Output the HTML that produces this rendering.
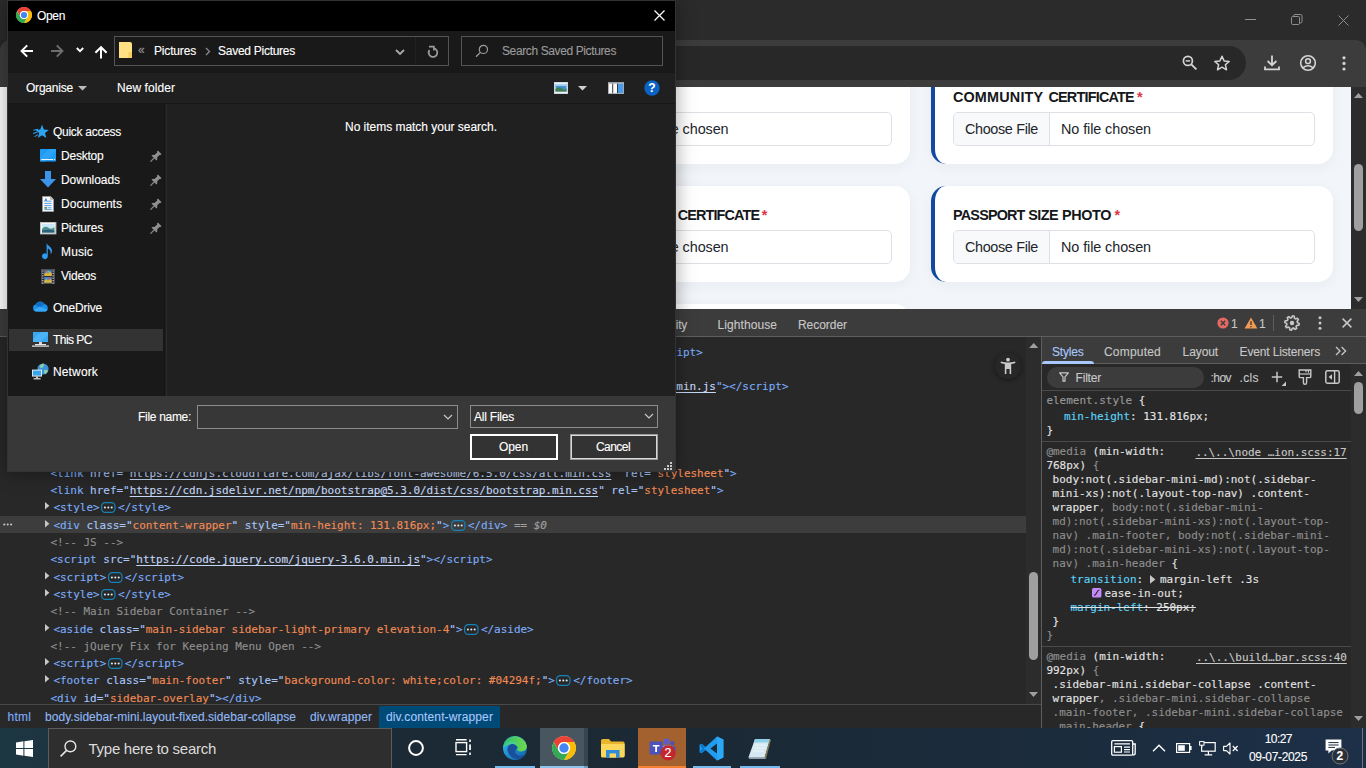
<!DOCTYPE html>
<html lang="en">
<head>
<meta charset="utf-8">
<title>Open</title>
<style>
*{box-sizing:border-box;margin:0;padding:0}
html,body{width:1366px;height:768px;overflow:hidden;background:#282828}
body{position:relative;font-family:"Liberation Sans",sans-serif;font-size:12px;color:#fff}
.a{position:absolute;display:block}
.t{position:absolute;white-space:pre;display:block;-webkit-text-stroke:.12px currentColor}
u{text-decoration:underline;text-underline-offset:1.5px;text-decoration-thickness:1px}
</style>
</head>
<body>
<div class="a" style="left:0px;top:0px;width:1366px;height:40px;background:#2b2b2b;"></div>
<div class="a" style="left:0px;top:40px;width:1366px;height:47px;background:#3c3c3c;border-radius:10px 10px 0 0;"></div>
<div class="a" style="left:150px;top:46px;width:1096px;height:34px;background:#282828;border-radius:17px;"></div>
<svg class="a" style="left:1245px;top:19px;" width="11" height="1" viewBox="0 0 11 1"><rect width="11" height="1" fill="#8f8f8f"/></svg>
<svg class="a" style="left:1291px;top:14px;" width="12" height="12" viewBox="0 0 12 12"><rect x=".5" y="2.5" width="8" height="8" rx="1.2" fill="none" stroke="#8f8f8f"/><path d="M2.6 2.5 V1.8 Q2.6 .5 3.9 .5 H9.6 Q11 .5 11 1.9 V7.6 Q11 8.9 9.7 8.9 H8.6" fill="none" stroke="#8f8f8f"/></svg>
<svg class="a" style="left:1338px;top:15px;" width="11" height="11" viewBox="0 0 11 11"><path d="M.5 .5 L10.5 10.5 M10.5 .5 L.5 10.5" stroke="#8f8f8f" stroke-width="1" fill="none"/></svg>
<svg class="a" style="left:1181px;top:54px;" width="17" height="17" viewBox="0 0 17 17"><circle cx="6.9" cy="6.9" r="4.5" fill="none" stroke="#d4d4d4" stroke-width="1.7"/><path d="M10.3 10.3 L15.4 15.4" stroke="#d4d4d4" stroke-width="1.9"/><path d="M4.7 6.9 H9.1" stroke="#d4d4d4" stroke-width="1.5"/></svg>
<svg class="a" style="left:1213px;top:54px;" width="18" height="18" viewBox="0 0 18 18"><path d="M9 2.2 L11.1 6.9 L16.2 7.4 L12.4 10.8 L13.5 15.8 L9 13.2 L4.5 15.8 L5.6 10.8 L1.8 7.4 L6.9 6.9 Z" fill="none" stroke="#d4d4d4" stroke-width="1.5" stroke-linejoin="round"/></svg>
<svg class="a" style="left:1263px;top:54px;" width="18" height="18" viewBox="0 0 18 18"><path d="M9 1.5 V11 M4.6 7 L9 11.2 L13.4 7" fill="none" stroke="#d4d4d4" stroke-width="1.8"/><path d="M2 12.4 V15.4 H16 V12.4" fill="none" stroke="#d4d4d4" stroke-width="1.8"/></svg>
<svg class="a" style="left:1299px;top:54px;" width="18" height="18" viewBox="0 0 18 18"><circle cx="9" cy="9" r="7.3" fill="none" stroke="#d4d4d4" stroke-width="1.6"/><circle cx="9" cy="7.2" r="2.4" fill="none" stroke="#d4d4d4" stroke-width="1.5"/><path d="M3.8 13.8 Q9 9.6 14.2 13.8" fill="none" stroke="#d4d4d4" stroke-width="1.5"/></svg>
<svg class="a" style="left:1342px;top:56px;" width="4" height="15" viewBox="0 0 4 15"><circle cx="2" cy="1.8" r="1.6" fill="#d4d4d4"/><circle cx="2" cy="7.4" r="1.6" fill="#d4d4d4"/><circle cx="2" cy="13" r="1.6" fill="#d4d4d4"/></svg>
<div class="a" style="left:0px;top:87px;width:1351px;height:222px;background:#f2f5f9;"></div>
<div class="a" style="left:0px;top:87px;width:1351px;height:222px;overflow:hidden"><div class="a" style="left:0px;top:-87px;width:1366px;height:768px">
<div class="a" style="left:0px;top:87px;width:66px;height:222px;background:#fff;box-shadow:0 0 12px rgba(0,0,0,.2);"></div>
<div class="a" style="left:480px;top:60px;width:430px;height:104px;background:#fff;border-radius:15px;box-shadow:0 3px 14px rgba(40,70,120,.05);"></div>
<div class="a" style="left:530.5px;top:112px;width:361px;height:34px;background:#fff;border:1px solid #dde1e6;border-radius:5px;"></div>
<div class="a" style="left:531.5px;top:113px;width:96px;height:32px;background:#f8f9fa;border-right:1px solid #dde1e6;border-radius:4px 0 0 4px;"></div>
<span class="t" style="left:542.5px;top:121.80px;font-size:14.4px;line-height:14.4px;color:#212529;letter-spacing:-0.345px;-webkit-text-stroke:0;">Choose File</span>
<span class="t" style="left:638.5px;top:121.80px;font-size:14.4px;line-height:14.4px;color:#212529;letter-spacing:-0.086px;-webkit-text-stroke:0;">No file chosen</span>
<div class="a" style="left:480px;top:186px;width:430px;height:96px;background:#fff;border-radius:15px;box-shadow:0 3px 14px rgba(40,70,120,.05);"></div>
<div class="a" style="left:530.5px;top:230px;width:361px;height:34px;background:#fff;border:1px solid #dde1e6;border-radius:5px;"></div>
<div class="a" style="left:531.5px;top:231px;width:96px;height:32px;background:#f8f9fa;border-right:1px solid #dde1e6;border-radius:4px 0 0 4px;"></div>
<span class="t" style="left:542.5px;top:239.80px;font-size:14.4px;line-height:14.4px;color:#212529;letter-spacing:-0.345px;-webkit-text-stroke:0;">Choose File</span>
<span class="t" style="left:638.5px;top:239.80px;font-size:14.4px;line-height:14.4px;color:#212529;letter-spacing:-0.086px;-webkit-text-stroke:0;">No file chosen</span>
<div class="a" style="left:480px;top:304px;width:430px;height:40px;background:#fff;border-radius:15px;box-shadow:0 3px 14px rgba(40,70,120,.05);"></div>
<div class="a" style="left:931px;top:60px;width:402px;height:104px;background:#fff;border-radius:15px;box-shadow:0 3px 14px rgba(40,70,120,.05);border-left:4px solid #114a9f;"></div>
<div class="a" style="left:953px;top:112px;width:361.5px;height:34px;background:#fff;border:1px solid #dde1e6;border-radius:5px;"></div>
<div class="a" style="left:954px;top:113px;width:96px;height:32px;background:#f8f9fa;border-right:1px solid #dde1e6;border-radius:4px 0 0 4px;"></div>
<span class="t" style="left:965px;top:121.80px;font-size:14.4px;line-height:14.4px;color:#212529;letter-spacing:-0.345px;-webkit-text-stroke:0;">Choose File</span>
<span class="t" style="left:1061px;top:121.80px;font-size:14.4px;line-height:14.4px;color:#212529;letter-spacing:-0.086px;-webkit-text-stroke:0;">No file chosen</span>
<div class="a" style="left:931px;top:186px;width:402px;height:96px;background:#fff;border-radius:15px;box-shadow:0 3px 14px rgba(40,70,120,.05);border-left:4px solid #114a9f;"></div>
<div class="a" style="left:953px;top:230px;width:361.5px;height:34px;background:#fff;border:1px solid #dde1e6;border-radius:5px;"></div>
<div class="a" style="left:954px;top:231px;width:96px;height:32px;background:#f8f9fa;border-right:1px solid #dde1e6;border-radius:4px 0 0 4px;"></div>
<span class="t" style="left:965px;top:239.80px;font-size:14.4px;line-height:14.4px;color:#212529;letter-spacing:-0.345px;-webkit-text-stroke:0;">Choose File</span>
<span class="t" style="left:1061px;top:239.80px;font-size:14.4px;line-height:14.4px;color:#212529;letter-spacing:-0.086px;-webkit-text-stroke:0;">No file chosen</span>
<span class="t" style="left:952.9000000000001px;top:89.80px;font-size:14.4px;line-height:14.4px;color:#15171a;font-weight:bold;letter-spacing:0.196px;-webkit-text-stroke:0;">COMMUNITY</span>
<span class="t" style="left:1048.4px;top:89.80px;font-size:14.4px;line-height:14.4px;color:#15171a;font-weight:bold;letter-spacing:-0.780px;-webkit-text-stroke:0;">CERTIFICATE</span>
<span class="t" style="left:1136.9px;top:89.80px;font-size:14.4px;line-height:14.4px;color:#dc3545;font-weight:bold;letter-spacing:1.591px;-webkit-text-stroke:0;">*</span>
<span class="t" style="left:953.1px;top:207.80px;font-size:14.4px;line-height:14.4px;color:#15171a;font-weight:bold;letter-spacing:-0.826px;-webkit-text-stroke:0;">PASSPORT</span>
<span class="t" style="left:1028.2px;top:207.80px;font-size:14.4px;line-height:14.4px;color:#15171a;font-weight:bold;letter-spacing:-0.550px;-webkit-text-stroke:0;">SIZE</span>
<span class="t" style="left:1061.9px;top:207.80px;font-size:14.4px;line-height:14.4px;color:#15171a;font-weight:bold;letter-spacing:-0.364px;-webkit-text-stroke:0;">PHOTO</span>
<span class="t" style="left:1114.6000000000001px;top:207.80px;font-size:14.4px;line-height:14.4px;color:#dc3545;font-weight:bold;letter-spacing:1.491px;-webkit-text-stroke:0;">*</span>
<span class="t" style="left:595.2px;top:207.80px;font-size:14.4px;line-height:14.4px;color:#15171a;font-weight:bold;letter-spacing:-0.082px;-webkit-text-stroke:0;">TRANSFER</span>
<span class="t" style="left:677.7px;top:207.80px;font-size:14.4px;line-height:14.4px;color:#15171a;font-weight:bold;letter-spacing:-0.858px;-webkit-text-stroke:0;">CERTIFCATE</span>
<span class="t" style="left:761.8000000000001px;top:207.80px;font-size:14.4px;line-height:14.4px;color:#dc3545;font-weight:bold;letter-spacing:1.691px;-webkit-text-stroke:0;">*</span>
</div></div>
<div class="a" style="left:1351px;top:87px;width:15px;height:222px;background:#2c2c2c;"></div>
<div class="a" style="left:1354px;top:164px;width:9px;height:67px;background:#9f9f9f;border-radius:5px;"></div>
<svg class="a" style="left:1354px;top:93px;" width="9" height="5" viewBox="0 0 9 5"><path d="M0 5 H9 L4.5 0 Z" fill="#9f9f9f"/></svg>
<svg class="a" style="left:1354px;top:297px;" width="9" height="5" viewBox="0 0 9 5"><path d="M0 0 H9 L4.5 5 Z" fill="#9f9f9f"/></svg>
<div class="a" style="left:0px;top:309px;width:1366px;height:419px;background:#282828;"></div>
<div class="a" style="left:0px;top:309px;width:1366px;height:28px;background:#3c3c3c;border-bottom:1px solid #5e5e5e;"></div>
<span class="t" style="left:585px;top:319.00px;font-size:12px;line-height:12px;color:#c7c7c7;letter-spacing:-0.269px;">Privacy and security</span>
<span class="t" style="left:717.5px;top:319.00px;font-size:12px;line-height:12px;color:#c7c7c7;letter-spacing:0.078px;">Lighthouse</span>
<span class="t" style="left:798px;top:319.00px;font-size:12px;line-height:12px;color:#c7c7c7;letter-spacing:-0.045px;">Recorder</span>
<svg class="a" style="left:1217px;top:317px;" width="12" height="12" viewBox="0 0 12 12"><circle cx="6" cy="6" r="5.6" fill="#e46962"/><path d="M3.8 3.8 L8.2 8.2 M8.2 3.8 L3.8 8.2" stroke="#3c3c3c" stroke-width="1.4"/></svg>
<span class="t" style="left:1231px;top:318.00px;font-size:12px;line-height:12px;color:#c7c7c7;">1</span>
<svg class="a" style="left:1244px;top:317px;" width="14" height="12" viewBox="0 0 14 12"><path d="M7 .6 L13.4 11.4 H.6 Z" fill="#f29b55"/><path d="M7 4.2 V8" stroke="#3c3c3c" stroke-width="1.4"/><circle cx="7" cy="9.7" r=".8" fill="#3c3c3c"/></svg>
<span class="t" style="left:1259px;top:318.00px;font-size:12px;line-height:12px;color:#c7c7c7;">1</span>
<div class="a" style="left:1273px;top:315px;width:1px;height:16px;background:#5e5e5e;"></div>
<svg class="a" style="left:1284px;top:315px;" width="16" height="16" viewBox="0 0 16 16"><path d="M15.18 8.48 L14.82 10.31 L12.84 10.39 L12.06 11.56 L12.74 13.42 L11.19 14.45 L9.73 13.11 L8.36 13.39 L7.52 15.18 L5.69 14.82 L5.61 12.84 L4.44 12.06 L2.58 12.74 L1.55 11.19 L2.89 9.73 L2.61 8.36 L0.82 7.52 L1.18 5.69 L3.16 5.61 L3.94 4.44 L3.26 2.58 L4.81 1.55 L6.27 2.89 L7.64 2.61 L8.48 0.82 L10.31 1.18 L10.39 3.16 L11.56 3.94 L13.42 3.26 L14.45 4.81 L13.11 6.27 L13.39 7.64 Z" fill="none" stroke="#c7c7c7" stroke-width="1.6" stroke-linejoin="round"/><circle cx="8" cy="8" r="2.2" fill="#c7c7c7"/></svg>
<svg class="a" style="left:1318px;top:316.3px;" width="4" height="14" viewBox="0 0 4 14"><circle cx="2" cy="1.8" r="1.5" fill="#c7c7c7"/><circle cx="2" cy="7" r="1.5" fill="#c7c7c7"/><circle cx="2" cy="12.2" r="1.5" fill="#c7c7c7"/></svg>
<svg class="a" style="left:1342px;top:318px;" width="10" height="10" viewBox="0 0 10 10"><path d="M.6 .6 L9.4 9.4 M9.4 .6 L.6 9.4" stroke="#c7c7c7" stroke-width="1.5"/></svg>
<div class="a" style="left:0px;top:516px;width:1026px;height:17px;background:#3d3d3d;"></div>
<svg class="a" style="left:3px;top:523px;" width="10" height="3" viewBox="0 0 10 3"><circle cx="1.3" cy="1.5" r="1.05" fill="#c7c7c7"/><circle cx="4.7" cy="1.5" r="1.05" fill="#c7c7c7"/><circle cx="8.1" cy="1.5" r="1.05" fill="#c7c7c7"/></svg>
<span class="t" style="left:643.4269999999999px;top:347.00px;font-size:11px;line-height:11px;color:#7cacf8;font-family:'DejaVu Sans Mono',monospace;letter-spacing:-0.026px;">&lt;/script&gt;</span>
<span class="t" style="left:715.933px;top:381.00px;font-size:11px;line-height:11px;color:#7cacf8;font-family:'DejaVu Sans Mono',monospace;letter-spacing:-0.027px;">&quot;&gt;&lt;/script&gt;</span>
<span class="t" style="left:214.56099999999998px;top:381.00px;font-size:11px;line-height:11px;color:#c4d7f5;font-family:'DejaVu Sans Mono',monospace;letter-spacing:-0.026px;"><u>https://cdn.jsdelivr.net/npm/bootstrap@5.3.0/dist/js/bootstrap.bundle.min.js</u></span>
<span class="t" style="left:50.5px;top:468.00px;font-size:11px;line-height:11px;color:#7cacf8;font-family:'DejaVu Sans Mono',monospace;letter-spacing:-0.025px;"><span style="color:#7cacf8">&lt;link</span><span style="color:#a8c7fa"> href=&quot;</span><span style="color:#c4d7f5"><u>https://cdnjs.cloudflare.com/ajax/libs/font-awesome/6.5.0/css/all.min.css</u></span><span style="color:#a8c7fa">&quot; rel=&quot;</span><span style="color:#f28b54">stylesheet</span><span style="color:#a8c7fa">&quot;</span><span style="color:#7cacf8">&gt;</span></span>
<span class="t" style="left:50.5px;top:485.00px;font-size:11px;line-height:11px;color:#7cacf8;font-family:'DejaVu Sans Mono',monospace;letter-spacing:-0.025px;"><span style="color:#7cacf8">&lt;link</span><span style="color:#a8c7fa"> href=&quot;</span><span style="color:#c4d7f5"><u>https://cdn.jsdelivr.net/npm/bootstrap@5.3.0/dist/css/bootstrap.min.css</u></span><span style="color:#a8c7fa">&quot; rel=&quot;</span><span style="color:#f28b54">stylesheet</span><span style="color:#a8c7fa">&quot;</span><span style="color:#7cacf8">&gt;</span></span>
<svg class="a" style="left:44.6px;top:502px;" width="5" height="8" viewBox="0 0 5 8"><path d="M0 0 L4.4 3.7 L0 7.4 Z" fill="#c7c7c7"/></svg>
<span class="t" style="left:53.4px;top:502.00px;font-size:11px;line-height:11px;color:#7cacf8;font-family:'DejaVu Sans Mono',monospace;letter-spacing:-0.020px;"><span style="color:#7cacf8">&lt;style</span><span style="color:#7cacf8">&gt;</span></span>
<svg class="a" style="left:101.2px;top:502.2px;" width="15" height="11" viewBox="0 0 15 11"><rect x=".6" y=".6" width="13.4" height="9.8" rx="3.6" fill="none" stroke="#1683b8" stroke-width="1.2"/><circle cx="3.9" cy="5.5" r="1.05" fill="#e3e9f0"/><circle cx="7.3" cy="5.5" r="1.05" fill="#e3e9f0"/><circle cx="10.7" cy="5.5" r="1.05" fill="#e3e9f0"/></svg>
<span class="t" style="left:118.07900000000001px;top:502.00px;font-size:11px;line-height:11px;color:#7cacf8;font-family:'DejaVu Sans Mono',monospace;letter-spacing:-0.026px;">&lt;/style&gt;</span>
<svg class="a" style="left:44.6px;top:520px;" width="5" height="8" viewBox="0 0 5 8"><path d="M0 0 L4.4 3.7 L0 7.4 Z" fill="#c7c7c7"/></svg>
<span class="t" style="left:53.4px;top:520.00px;font-size:11px;line-height:11px;color:#7cacf8;font-family:'DejaVu Sans Mono',monospace;letter-spacing:-0.025px;"><span style="color:#7cacf8">&lt;div</span><span style="color:#a8c7fa"> class=&quot;</span><span style="color:#f28b54">content-wrapper</span><span style="color:#a8c7fa">&quot;</span><span style="color:#a8c7fa"> style=&quot;</span><span style="color:#f28b54">min-height: 131.816px;</span><span style="color:#a8c7fa">&quot;</span><span style="color:#7cacf8">&gt;</span></span>
<svg class="a" style="left:450.8px;top:520.2px;" width="15" height="11" viewBox="0 0 15 11"><rect x=".6" y=".6" width="13.4" height="9.8" rx="3.6" fill="none" stroke="#1683b8" stroke-width="1.2"/><circle cx="3.9" cy="5.5" r="1.05" fill="#e3e9f0"/><circle cx="7.3" cy="5.5" r="1.05" fill="#e3e9f0"/><circle cx="10.7" cy="5.5" r="1.05" fill="#e3e9f0"/></svg>
<span class="t" style="left:467.72px;top:520.00px;font-size:11px;line-height:11px;color:#7cacf8;font-family:'DejaVu Sans Mono',monospace;letter-spacing:-0.028px;">&lt;/div&gt;</span>
<span class="t" style="left:507.302px;top:520.00px;font-size:11px;line-height:11px;color:#a0a0a0;font-family:'DejaVu Sans Mono',monospace;letter-spacing:-0.028px;font-style:italic;"> == $0</span>
<span class="t" style="left:50.5px;top:537.00px;font-size:11px;line-height:11px;color:#7cacf8;font-family:'DejaVu Sans Mono',monospace;letter-spacing:-0.021px;"><span style="color:#8f8f8f">&lt;!-- JS --&gt;</span></span>
<span class="t" style="left:50.5px;top:554.00px;font-size:11px;line-height:11px;color:#7cacf8;font-family:'DejaVu Sans Mono',monospace;letter-spacing:-0.025px;"><span style="color:#7cacf8">&lt;script</span><span style="color:#a8c7fa"> src=&quot;</span><span style="color:#c4d7f5"><u>https://code.jquery.com/jquery-3.6.0.min.js</u></span><span style="color:#a8c7fa">&quot;</span><span style="color:#7cacf8">&gt;&lt;/script&gt;</span></span>
<svg class="a" style="left:44.6px;top:572px;" width="5" height="8" viewBox="0 0 5 8"><path d="M0 0 L4.4 3.7 L0 7.4 Z" fill="#c7c7c7"/></svg>
<span class="t" style="left:53.4px;top:572.00px;font-size:11px;line-height:11px;color:#7cacf8;font-family:'DejaVu Sans Mono',monospace;letter-spacing:-0.019px;"><span style="color:#7cacf8">&lt;script</span><span style="color:#7cacf8">&gt;</span></span>
<svg class="a" style="left:107.8px;top:572.2px;" width="15" height="11" viewBox="0 0 15 11"><rect x=".6" y=".6" width="13.4" height="9.8" rx="3.6" fill="none" stroke="#1683b8" stroke-width="1.2"/><circle cx="3.9" cy="5.5" r="1.05" fill="#e3e9f0"/><circle cx="7.3" cy="5.5" r="1.05" fill="#e3e9f0"/><circle cx="10.7" cy="5.5" r="1.05" fill="#e3e9f0"/></svg>
<span class="t" style="left:124.676px;top:572.00px;font-size:11px;line-height:11px;color:#7cacf8;font-family:'DejaVu Sans Mono',monospace;letter-spacing:-0.026px;">&lt;/script&gt;</span>
<svg class="a" style="left:44.6px;top:589px;" width="5" height="8" viewBox="0 0 5 8"><path d="M0 0 L4.4 3.7 L0 7.4 Z" fill="#c7c7c7"/></svg>
<span class="t" style="left:53.4px;top:589.00px;font-size:11px;line-height:11px;color:#7cacf8;font-family:'DejaVu Sans Mono',monospace;letter-spacing:-0.020px;"><span style="color:#7cacf8">&lt;style</span><span style="color:#7cacf8">&gt;</span></span>
<svg class="a" style="left:101.2px;top:589.2px;" width="15" height="11" viewBox="0 0 15 11"><rect x=".6" y=".6" width="13.4" height="9.8" rx="3.6" fill="none" stroke="#1683b8" stroke-width="1.2"/><circle cx="3.9" cy="5.5" r="1.05" fill="#e3e9f0"/><circle cx="7.3" cy="5.5" r="1.05" fill="#e3e9f0"/><circle cx="10.7" cy="5.5" r="1.05" fill="#e3e9f0"/></svg>
<span class="t" style="left:118.07900000000001px;top:589.00px;font-size:11px;line-height:11px;color:#7cacf8;font-family:'DejaVu Sans Mono',monospace;letter-spacing:-0.026px;">&lt;/style&gt;</span>
<span class="t" style="left:50.5px;top:606.00px;font-size:11px;line-height:11px;color:#7cacf8;font-family:'DejaVu Sans Mono',monospace;letter-spacing:-0.024px;"><span style="color:#8f8f8f">&lt;!-- Main Sidebar Container --&gt;</span></span>
<svg class="a" style="left:44.6px;top:624px;" width="5" height="8" viewBox="0 0 5 8"><path d="M0 0 L4.4 3.7 L0 7.4 Z" fill="#c7c7c7"/></svg>
<span class="t" style="left:53.4px;top:624.00px;font-size:11px;line-height:11px;color:#7cacf8;font-family:'DejaVu Sans Mono',monospace;letter-spacing:-0.025px;"><span style="color:#7cacf8">&lt;aside</span><span style="color:#a8c7fa"> class=&quot;</span><span style="color:#f28b54">main-sidebar sidebar-light-primary elevation-4</span><span style="color:#a8c7fa">&quot;</span><span style="color:#7cacf8">&gt;</span></span>
<svg class="a" style="left:464.0px;top:624.2px;" width="15" height="11" viewBox="0 0 15 11"><rect x=".6" y=".6" width="13.4" height="9.8" rx="3.6" fill="none" stroke="#1683b8" stroke-width="1.2"/><circle cx="3.9" cy="5.5" r="1.05" fill="#e3e9f0"/><circle cx="7.3" cy="5.5" r="1.05" fill="#e3e9f0"/><circle cx="10.7" cy="5.5" r="1.05" fill="#e3e9f0"/></svg>
<span class="t" style="left:480.914px;top:624.00px;font-size:11px;line-height:11px;color:#7cacf8;font-family:'DejaVu Sans Mono',monospace;letter-spacing:-0.026px;">&lt;/aside&gt;</span>
<span class="t" style="left:50.5px;top:641.00px;font-size:11px;line-height:11px;color:#7cacf8;font-family:'DejaVu Sans Mono',monospace;letter-spacing:-0.024px;"><span style="color:#8f8f8f">&lt;!-- jQuery Fix for Keeping Menu Open --&gt;</span></span>
<svg class="a" style="left:44.6px;top:658px;" width="5" height="8" viewBox="0 0 5 8"><path d="M0 0 L4.4 3.7 L0 7.4 Z" fill="#c7c7c7"/></svg>
<span class="t" style="left:53.4px;top:658.00px;font-size:11px;line-height:11px;color:#7cacf8;font-family:'DejaVu Sans Mono',monospace;letter-spacing:-0.017px;"><span style="color:#7cacf8">&lt;script</span><span style="color:#7cacf8">&gt;</span></span>
<svg class="a" style="left:107.8px;top:658.2px;" width="15" height="11" viewBox="0 0 15 11"><rect x=".6" y=".6" width="13.4" height="9.8" rx="3.6" fill="none" stroke="#1683b8" stroke-width="1.2"/><circle cx="3.9" cy="5.5" r="1.05" fill="#e3e9f0"/><circle cx="7.3" cy="5.5" r="1.05" fill="#e3e9f0"/><circle cx="10.7" cy="5.5" r="1.05" fill="#e3e9f0"/></svg>
<span class="t" style="left:124.676px;top:658.00px;font-size:11px;line-height:11px;color:#7cacf8;font-family:'DejaVu Sans Mono',monospace;letter-spacing:-0.026px;">&lt;/script&gt;</span>
<svg class="a" style="left:44.6px;top:675px;" width="5" height="8" viewBox="0 0 5 8"><path d="M0 0 L4.4 3.7 L0 7.4 Z" fill="#c7c7c7"/></svg>
<span class="t" style="left:53.4px;top:675.00px;font-size:11px;line-height:11px;color:#7cacf8;font-family:'DejaVu Sans Mono',monospace;letter-spacing:-0.025px;"><span style="color:#7cacf8">&lt;footer</span><span style="color:#a8c7fa"> class=&quot;</span><span style="color:#f28b54">main-footer</span><span style="color:#a8c7fa">&quot;</span><span style="color:#a8c7fa"> style=&quot;</span><span style="color:#f28b54">background-color: white;color: #04294f;</span><span style="color:#a8c7fa">&quot;</span><span style="color:#7cacf8">&gt;</span></span>
<svg class="a" style="left:556.4px;top:675.2px;" width="15" height="11" viewBox="0 0 15 11"><rect x=".6" y=".6" width="13.4" height="9.8" rx="3.6" fill="none" stroke="#1683b8" stroke-width="1.2"/><circle cx="3.9" cy="5.5" r="1.05" fill="#e3e9f0"/><circle cx="7.3" cy="5.5" r="1.05" fill="#e3e9f0"/><circle cx="10.7" cy="5.5" r="1.05" fill="#e3e9f0"/></svg>
<span class="t" style="left:573.272px;top:675.00px;font-size:11px;line-height:11px;color:#7cacf8;font-family:'DejaVu Sans Mono',monospace;letter-spacing:-0.026px;">&lt;/footer&gt;</span>
<span class="t" style="left:50.5px;top:693.00px;font-size:11px;line-height:11px;color:#7cacf8;font-family:'DejaVu Sans Mono',monospace;letter-spacing:-0.024px;"><span style="color:#7cacf8">&lt;div</span><span style="color:#a8c7fa"> id=&quot;</span><span style="color:#f28b54">sidebar-overlay</span><span style="color:#a8c7fa">&quot;</span><span style="color:#7cacf8">&gt;&lt;/div&gt;</span></span>
<div class="a" style="left:995.2px;top:353.2px;width:25.6px;height:25.6px;background:#272727;border-radius:50%;box-shadow:0 1px 4px 1px rgba(0,0,0,.3);"></div>
<svg class="a" style="left:1000px;top:357px;" width="16" height="18" viewBox="0 0 16 18"><circle cx="8" cy="2.7" r="1.9" fill="#c9c9c9"/><path d="M.9 4.6 Q4.6 5.6 8 5.6 Q11.4 5.6 15.1 4.6 L15.4 6 Q12.6 6.9 11.2 7 V17 H9.6 V12 H6.4 V17 H4.8 V7 Q3.4 6.9 .6 6 Z" fill="#c9c9c9"/></svg>
<div class="a" style="left:1026px;top:337px;width:15.5px;height:367px;background:#2c2c2c;"></div>
<div class="a" style="left:1029px;top:572px;width:9px;height:88px;background:#9f9f9f;border-radius:4.5px;"></div>
<svg class="a" style="left:1029px;top:343px;" width="9.4" height="5.2" viewBox="0 0 9.4 5.2"><path d="M0 5.2 H9.4 L4.7 0 Z" fill="#9f9f9f"/></svg>
<svg class="a" style="left:1029px;top:691.5px;" width="9" height="5" viewBox="0 0 9 5"><path d="M0 0 H9 L4.5 5 Z" fill="#9f9f9f"/></svg>
<div class="a" style="left:0px;top:704px;width:1041.5px;height:24px;background:#282828;border-top:1px solid #4a4a4a;"></div>
<div class="a" style="left:379px;top:706px;width:121px;height:22px;background:#004a77;"></div>
<span class="t" style="left:7.6px;top:711.00px;font-size:12px;line-height:12px;color:#7cacf8;letter-spacing:0.182px;">html</span>
<span class="t" style="left:45px;top:711.00px;font-size:12px;line-height:12px;color:#8fb8f6;letter-spacing:0.038px;">body.sidebar-mini.layout-fixed.sidebar-collapse</span>
<span class="t" style="left:310px;top:711.00px;font-size:12px;line-height:12px;color:#8fb8f6;letter-spacing:0.078px;">div.wrapper</span>
<span class="t" style="left:386px;top:711.00px;font-size:12px;line-height:12px;color:#a8c7fa;letter-spacing:0.132px;">div.content-wrapper</span>
<div class="a" style="left:1041px;top:337px;width:325px;height:391px;background:#282828;border-left:1px solid #5e5e5e;"></div>
<div class="a" style="left:1042px;top:337px;width:324px;height:26px;background:#3c3c3c;"></div>
<div class="a" style="left:1042px;top:362.5px;width:324px;height:1px;background:#5e5e5e;"></div>
<div class="a" style="left:1042px;top:361px;width:51.6px;height:3px;background:#a8c7fa;border-radius:3px 3px 0 0;"></div>
<span class="t" style="left:1052px;top:346.00px;font-size:12px;line-height:12px;color:#a8c7fa;letter-spacing:-0.198px;">Styles</span>
<span class="t" style="left:1104px;top:346.00px;font-size:12px;line-height:12px;color:#c7c7c7;letter-spacing:0.203px;">Computed</span>
<span class="t" style="left:1182.6px;top:346.00px;font-size:12px;line-height:12px;color:#c7c7c7;letter-spacing:-0.105px;">Layout</span>
<span class="t" style="left:1239.6px;top:346.00px;font-size:12px;line-height:12px;color:#c7c7c7;letter-spacing:-0.155px;">Event Listeners</span>
<svg class="a" style="left:1335px;top:346px;" width="12" height="10" viewBox="0 0 12 10"><path d="M1 1 L5 5 L1 9 M6.6 1 L10.6 5 L6.6 9" stroke="#c7c7c7" stroke-width="1.3" fill="none"/></svg>
<div class="a" style="left:1047px;top:367px;width:156.5px;height:20.5px;background:#3c3c3c;border-radius:10.5px;"></div>
<svg class="a" style="left:1059px;top:372px;" width="10" height="10" viewBox="0 0 10 10"><path d="M.6 .8 H9.4 L6 4.9 V9.2 H4 V4.9 Z" fill="none" stroke="#c7c7c7" stroke-width="1.2" stroke-linejoin="round"/></svg>
<span class="t" style="left:1075.6px;top:372.00px;font-size:12px;line-height:12px;color:#c7c7c7;letter-spacing:-0.212px;">Filter</span>
<span class="t" style="left:1210.5px;top:372.00px;font-size:12px;line-height:12px;color:#c7c7c7;letter-spacing:-0.547px;">:hov</span>
<span class="t" style="left:1239.6px;top:372.00px;font-size:12px;line-height:12px;color:#c7c7c7;letter-spacing:0.275px;">.cls</span>
<svg class="a" style="left:1271px;top:371px;" width="16" height="16" viewBox="0 0 16 16"><path d="M6 .8 V11.2 M.8 6 H11.2" stroke="#c7c7c7" stroke-width="1.5"/><path d="M15 10.6 V15 H10.6 Z" fill="#c7c7c7"/></svg>
<svg class="a" style="left:1298px;top:369px;" width="14" height="17" viewBox="0 0 14 17"><path d="M1.2 1 H12.8 V7.4 Q12.8 8.6 11.6 8.6 H8.6 V13.6 Q8.6 15.4 7 15.4 Q5.4 15.4 5.4 13.6 V8.6 H2.4 Q1.2 8.6 1.2 7.4 Z" fill="none" stroke="#c7c7c7" stroke-width="1.4"/><path d="M1.2 5 H12.8" stroke="#c7c7c7" stroke-width="1.2"/><path d="M8 1 V3.2 M10.4 1 V3.8" stroke="#c7c7c7" stroke-width="1.2"/></svg>
<svg class="a" style="left:1325px;top:370px;" width="15" height="14" viewBox="0 0 15 14"><rect x=".8" y=".8" width="13.4" height="12.4" rx="1.6" fill="none" stroke="#c7c7c7" stroke-width="1.5"/><path d="M9.6 .8 V13.2" stroke="#c7c7c7" stroke-width="1.4"/><path d="M7 4.2 V9.8 L3.6 7 Z" fill="#c7c7c7"/></svg>
<div class="a" style="left:1042px;top:390px;width:309px;height:1px;background:#4a4a4a;"></div>
<span class="t" style="left:1046.4px;top:395.00px;font-size:11px;line-height:11px;color:#e3e3e3;font-family:'DejaVu Sans Mono',monospace;letter-spacing:-0.022px;"><span style="color:#9a9a9a;">element.style </span><span style="color:#e3e3e3;">{</span></span>
<span class="t" style="left:1064px;top:411.00px;font-size:11px;line-height:11px;color:#e3e3e3;font-family:'DejaVu Sans Mono',monospace;letter-spacing:-0.023px;"><span style="color:#5cd5fb;">min-height</span><span style="color:#e3e3e3;">: 131.816px;</span></span>
<span class="t" style="left:1046.4px;top:425.00px;font-size:11px;line-height:11px;color:#e3e3e3;font-family:'DejaVu Sans Mono',monospace;letter-spacing:-0.007px;"><span style="color:#e3e3e3;">}</span></span>
<div class="a" style="left:1042px;top:441px;width:309px;height:1px;background:#4a4a4a;"></div>
<span class="t" style="left:1046.4px;top:446.00px;font-size:11px;line-height:11px;color:#e3e3e3;font-family:'DejaVu Sans Mono',monospace;letter-spacing:-0.023px;"><span style="color:#8f8f8f;">@media </span><span style="color:#e3e3e3;">(min-width:</span></span>
<span class="t" style="left:1195.4px;top:447.00px;font-size:11px;line-height:11px;color:#c7c7c7;font-family:'DejaVu Sans Mono',monospace;letter-spacing:-0.045px;"><u>..\..\node_…ion.scss:17</u></span>
<span class="t" style="left:1046.4px;top:460.00px;font-size:11px;line-height:11px;color:#e3e3e3;font-family:'DejaVu Sans Mono',monospace;letter-spacing:-0.019px;"><span style="color:#e3e3e3;">768px) </span><span style="color:#8f8f8f;">{</span></span>
<span class="t" style="left:1052.6px;top:474.00px;font-size:11px;line-height:11px;color:#e3e3e3;font-family:'DejaVu Sans Mono',monospace;letter-spacing:-0.024px;"><span style="color:#e3e3e3;">body:not(.sidebar-mini-md):not(.sidebar-</span></span>
<span class="t" style="left:1052.6px;top:488.00px;font-size:11px;line-height:11px;color:#e3e3e3;font-family:'DejaVu Sans Mono',monospace;letter-spacing:-0.024px;"><span style="color:#e3e3e3;">mini-xs):not(.layout-top-nav) .content-</span></span>
<span class="t" style="left:1052.6px;top:502.00px;font-size:11px;line-height:11px;color:#e3e3e3;font-family:'DejaVu Sans Mono',monospace;letter-spacing:-0.024px;"><span style="color:#e3e3e3;">wrapper</span><span style="color:#8f8f8f;">, body:not(.sidebar-mini-</span></span>
<span class="t" style="left:1052.6px;top:516.00px;font-size:11px;line-height:11px;color:#e3e3e3;font-family:'DejaVu Sans Mono',monospace;letter-spacing:-0.024px;"><span style="color:#8f8f8f;">md):not(.sidebar-mini-xs):not(.layout-top-</span></span>
<span class="t" style="left:1052.6px;top:530.00px;font-size:11px;line-height:11px;color:#e3e3e3;font-family:'DejaVu Sans Mono',monospace;letter-spacing:-0.024px;"><span style="color:#8f8f8f;">nav) .main-footer, body:not(.sidebar-mini-</span></span>
<span class="t" style="left:1052.6px;top:544.00px;font-size:11px;line-height:11px;color:#e3e3e3;font-family:'DejaVu Sans Mono',monospace;letter-spacing:-0.024px;"><span style="color:#8f8f8f;">md):not(.sidebar-mini-xs):not(.layout-top-</span></span>
<span class="t" style="left:1052.6px;top:558.00px;font-size:11px;line-height:11px;color:#e3e3e3;font-family:'DejaVu Sans Mono',monospace;letter-spacing:-0.022px;"><span style="color:#8f8f8f;">nav) .main-header </span><span style="color:#e3e3e3;">{</span></span>
<span class="t" style="left:1070.5px;top:574.00px;font-size:11px;line-height:11px;color:#e3e3e3;font-family:'DejaVu Sans Mono',monospace;letter-spacing:-0.020px;"><span style="color:#5cd5fb;">transition</span><span style="color:#e3e3e3;">: </span></span>
<svg class="a" style="left:1149.6px;top:574.6px;" width="6" height="9" viewBox="0 0 6 9"><path d="M0 0 L5.4 4.4 L0 8.8 Z" fill="#c7c7c7"/></svg>
<span class="t" style="left:1160px;top:574.00px;font-size:11px;line-height:11px;color:#e3e3e3;font-family:'DejaVu Sans Mono',monospace;letter-spacing:-0.020px;"><span style="color:#e3e3e3;">margin-left .3s</span></span>
<svg class="a" style="left:1092px;top:588.2px;" width="10" height="10" viewBox="0 0 10 10"><rect width="9.4" height="9.4" rx="1.5" fill="#c58af9"/><path d="M2 7.4 C5 7.4 4.4 2 7.4 2" stroke="#282828" stroke-width="1.2" fill="none"/></svg>
<span class="t" style="left:1104.5px;top:588.00px;font-size:11px;line-height:11px;color:#e3e3e3;font-family:'DejaVu Sans Mono',monospace;letter-spacing:-0.020px;"><span style="color:#e3e3e3;">ease-in-out;</span></span>
<span class="t" style="left:1070.5px;top:602.00px;font-size:11px;line-height:11px;color:#e3e3e3;font-family:'DejaVu Sans Mono',monospace;letter-spacing:-0.022px;text-decoration:line-through;text-decoration-color:#e3e3e3;"><span style="color:#5cd5fb;">margin-left</span><span style="color:#e3e3e3;">: 250px;</span></span>
<span class="t" style="left:1052.6px;top:616.00px;font-size:11px;line-height:11px;color:#e3e3e3;font-family:'DejaVu Sans Mono',monospace;letter-spacing:-0.006px;"><span style="color:#e3e3e3;">}</span></span>
<span class="t" style="left:1046.4px;top:630.00px;font-size:11px;line-height:11px;color:#e3e3e3;font-family:'DejaVu Sans Mono',monospace;letter-spacing:-0.006px;"><span style="color:#8f8f8f;">}</span></span>
<div class="a" style="left:1042px;top:646px;width:309px;height:1px;background:#4a4a4a;"></div>
<span class="t" style="left:1046.4px;top:651.00px;font-size:11px;line-height:11px;color:#e3e3e3;font-family:'DejaVu Sans Mono',monospace;letter-spacing:-0.021px;"><span style="color:#8f8f8f;">@media </span><span style="color:#e3e3e3;">(min-width:</span></span>
<span class="t" style="left:1196px;top:652.00px;font-size:11px;line-height:11px;color:#c7c7c7;font-family:'DejaVu Sans Mono',monospace;letter-spacing:-0.066px;"><u>..\..\build…bar.scss:40</u></span>
<span class="t" style="left:1046.4px;top:665.00px;font-size:11px;line-height:11px;color:#e3e3e3;font-family:'DejaVu Sans Mono',monospace;letter-spacing:-0.017px;"><span style="color:#e3e3e3;">992px) </span><span style="color:#8f8f8f;">{</span></span>
<span class="t" style="left:1052.6px;top:679.00px;font-size:11px;line-height:11px;color:#e3e3e3;font-family:'DejaVu Sans Mono',monospace;letter-spacing:-0.023px;"><span style="color:#e3e3e3;">.sidebar-mini.sidebar-collapse .content-</span></span>
<span class="t" style="left:1052.6px;top:693.00px;font-size:11px;line-height:11px;color:#e3e3e3;font-family:'DejaVu Sans Mono',monospace;letter-spacing:-0.023px;"><span style="color:#e3e3e3;">wrapper</span><span style="color:#8f8f8f;">, .sidebar-mini.sidebar-collapse</span></span>
<span class="t" style="left:1052.6px;top:707.00px;font-size:11px;line-height:11px;color:#e3e3e3;font-family:'DejaVu Sans Mono',monospace;letter-spacing:-0.024px;"><span style="color:#8f8f8f;">.main-footer, .sidebar-mini.sidebar-collapse</span></span>
<span class="t" style="left:1052.6px;top:721.00px;font-size:11px;line-height:11px;color:#e3e3e3;font-family:'DejaVu Sans Mono',monospace;letter-spacing:-0.020px;"><span style="color:#8f8f8f;">.main-header </span><span style="color:#e3e3e3;">{</span></span>
<div class="a" style="left:1351px;top:364px;width:15px;height:364px;background:#2c2c2c;"></div>
<div class="a" style="left:1354px;top:381.5px;width:9px;height:32.5px;background:#9f9f9f;border-radius:5px;"></div>
<svg class="a" style="left:1354px;top:370.5px;" width="9" height="5" viewBox="0 0 9 5"><path d="M0 5 H9 L4.5 0 Z" fill="#9f9f9f"/></svg>
<svg class="a" style="left:1354px;top:715.5px;" width="9" height="5" viewBox="0 0 9 5"><path d="M0 0 H9 L4.5 5 Z" fill="#9f9f9f"/></svg>
<div class="a" style="left:0px;top:728px;width:1366px;height:40px;background:linear-gradient(90deg,#1d3742 0,#1c3440 48px,#1b2a35 400px,#1b2935 700px,#1b2b3b 1000px,#1d3048 1366px);"></div>
<svg class="a" style="left:15.6px;top:739.6px;" width="17" height="17" viewBox="0 0 17 17"><path d="M0 2.4 L7.4 1.3 V8 H0 Z M8.4 1.2 L17 0 V8 H8.4 Z M0 9 H7.4 V15.7 L0 14.6 Z M8.4 9 H17 V17 L8.4 15.8 Z" fill="#fff"/></svg>
<div class="a" style="left:48px;top:728px;width:344px;height:40px;background:#2e2e2e;border:1px solid #5c5c5c;border-bottom:none;"></div>
<svg class="a" style="left:60px;top:740px;" width="17" height="17" viewBox="0 0 17 17"><circle cx="10.4" cy="6.4" r="5.4" fill="none" stroke="#e6e6e6" stroke-width="1.4"/><path d="M6.6 10.4 L.6 16.4" stroke="#e6e6e6" stroke-width="1.5"/></svg>
<span class="t" style="left:88.5px;top:741.00px;font-size:15px;line-height:15px;color:#dcdcdc;letter-spacing:-0.267px;-webkit-text-stroke:0;">Type here to search</span>
<svg class="a" style="left:407px;top:739px;" width="18" height="18" viewBox="0 0 18 18"><circle cx="9" cy="9" r="6.9" fill="none" stroke="#fff" stroke-width="2"/></svg>
<svg class="a" style="left:455px;top:739px;" width="18" height="17" viewBox="0 0 18 17"><rect x="1" y="3.6" width="10.6" height="9" fill="none" stroke="#fff" stroke-width="1.4"/><path d="M1 .8 H11.6 M1 15.6 H11.6" stroke="#fff" stroke-width="1.4"/><path d="M15 .6 V3 M15 13.4 V16" stroke="#fff" stroke-width="1.6"/><rect x="14.2" y="5.4" width="1.7" height="5.6" fill="#fff"/></svg>
<svg class="a" style="left:502px;top:735px;" width="26" height="26" viewBox="0 0 26 26"><defs><linearGradient id="eg1" x1="0" y1="0" x2="1" y2="1"><stop offset="0" stop-color="#35c1f1"/><stop offset="1" stop-color="#0c59a4"/></linearGradient><linearGradient id="eg2" x1="0" y1="0" x2="1" y2="0"><stop offset="0" stop-color="#2fbe6e"/><stop offset="1" stop-color="#6fdc4e"/></linearGradient></defs><circle cx="13" cy="13" r="12" fill="url(#eg1)"/><path d="M1.2 12 A12 12 0 0 1 24.9 11 Q25 16 19 16.4 Q14 16.6 15.6 12.6 Q13 8 8 9.4 Q3 11 1.2 12 Z" fill="url(#eg2)"/><path d="M15.6 12.6 Q13 8 8 9.4 Q4.6 11.4 5.6 16 Q7.6 22.6 15 24.2 Q20 23.6 22.6 20 Q16 22 13.4 18 Q12.6 15 15.6 12.6 Z" fill="#1a4f9c"/><path d="M1.2 12 Q3 7 9 6.6 Q15 6.6 17 11 Q14 8 9 9 Q3 10.4 1.2 12 Z" fill="#48d6c0" opacity=".55"/></svg>
<div class="a" style="left:495px;top:766px;width:40px;height:2px;background:#76b9ed;"></div>
<div class="a" style="left:540px;top:728px;width:44px;height:40px;background:#47565f;"></div>
<div class="a" style="left:584px;top:728px;width:4px;height:40px;background:#36454f;"></div>
<div class="a" style="left:540px;top:766px;width:44px;height:2px;background:#8cc4ee;"></div>
<div class="a" style="left:584px;top:766px;width:4px;height:2px;background:#6b9fc4;"></div>
<svg class="a" style="left:552px;top:736px;" width="24" height="24" viewBox="0 0 24 24"><circle cx="12" cy="12" r="11.8" fill="#fff"/><path d="M6.80 15.00 L1.61 6.00 A12 12 0 0 1 22.39 6.00 L12.00 6.00 A6.0 6.0 0 0 0 6.80 15.00 Z" fill="#ea4335"/><path d="M12.00 6.00 L22.39 6.00 A12 12 0 0 1 12.00 24.00 L17.20 15.00 A6.0 6.0 0 0 0 12.00 6.00 Z" fill="#fbbc04"/><path d="M17.20 15.00 L12.00 24.00 A12 12 0 0 1 1.61 6.00 L6.80 15.00 A6.0 6.0 0 0 0 17.20 15.00 Z" fill="#34a853"/><circle cx="12" cy="12" r="6.00" fill="#fff"/><circle cx="12" cy="12" r="4.68" fill="#4285f4"/></svg>
<svg class="a" style="left:601px;top:739px;" width="24" height="19" viewBox="0 0 24 19"><path d="M0 1.6 Q0 0 1.6 0 H8 L10 2.4 H22 Q23.6 2.4 23.6 4 V17 H0 Z" fill="#e9b52c"/><path d="M0 5 H23.6 V17 Q23.6 18.6 22 18.6 H1.6 Q0 18.6 0 17 Z" fill="#fbd75b"/><path d="M5 11 H18.6 V18.6 H5 Z" fill="#2f8ad8"/><path d="M8.6 14.4 H15 V18.6 H8.6 Z" fill="#fbd75b"/></svg>
<div class="a" style="left:638px;top:728px;width:48px;height:40px;background:#a3612f;"></div>
<div class="a" style="left:638px;top:766px;width:48px;height:2px;background:#f5802f;"></div>
<svg class="a" style="left:648px;top:737px;" width="28" height="24" viewBox="0 0 28 24"><circle cx="18.6" cy="4.6" r="3.2" fill="#5b5fc7"/><circle cx="24.4" cy="6.2" r="2.2" fill="#4f52b2"/><path d="M13 8.6 H23 V15.6 Q23 20 18 20 Q13 20 13 15.6 Z" fill="#7b83eb"/><path d="M22 9.6 H27.6 V14.4 Q27.6 17.6 24.6 17.6 H22 Z" fill="#4f52b2"/><rect x="1.6" y="4.6" width="13" height="13" rx="1.4" fill="#4b53bc"/><path d="M4.8 8 H11.4 V9.6 H9 V15 H7.2 V9.6 H4.8 Z" fill="#fff"/><circle cx="20" cy="16" r="7.6" fill="#c4262e"/></svg>
<span class="t" style="left:1px;top:-9.25px;font-size:12.5px;line-height:12.5px;color:#fff;left:664.4px;top:746.6px;">2</span>
<svg class="a" style="left:699px;top:736px;" width="25" height="25" viewBox="0 0 25 25"><path d="M18 .6 L24.4 3.6 V21.4 L18 24.4 L6.6 14 L2.6 17.2 L.6 16.2 V8.8 L2.6 7.8 L6.6 11 Z" fill="#1f9cf0"/><path d="M18 .6 L24.4 3.6 V21.4 L18 24.4 Z" fill="#2aa7f5"/><path d="M18 7.4 V17.6 L11.4 12.5 Z" fill="#1b2a35"/><path d="M.6 8.8 L2.6 7.8 L6.6 11 L4.6 12.5 L6.6 14 L2.6 17.2 L.6 16.2 L3.4 12.5 Z" fill="#0d78c8"/></svg>
<div class="a" style="left:693px;top:766px;width:38px;height:2px;background:#76b9ed;"></div>
<svg class="a" style="left:747px;top:737px;" width="24" height="23" viewBox="0 0 24 23"><path d="M8 2 L23 2 L17.6 20.6 L1.4 20.6 Z" fill="#d6e9f2"/><path d="M8 2 L23 2 L22 5.4 L7 5.4 Z" fill="#8fd0e8"/><path d="M17.6 20.6 L23 2 L23.8 3.2 L19 21.8 Z" fill="#8a7a55"/><path d="M1.4 20.6 H17.6 L19 21.8 H2.4 Z" fill="#b9cdd6"/><path d="M8 8 L19 8 M7 11 L18 11 M6 14 L17 14" stroke="#eef6fa" stroke-width="1"/></svg>
<div class="a" style="left:740px;top:766px;width:40px;height:2px;background:#76b9ed;"></div>
<svg class="a" style="left:1111px;top:740px;" width="25" height="16" viewBox="0 0 25 16"><rect x=".7" y=".7" width="21" height="14.4" rx="1.2" fill="none" stroke="#fff" stroke-width="1.3"/><path d="M22 4 H24.2 V13 Q24.2 15 22.2 15" fill="none" stroke="#fff" stroke-width="1.3"/><rect x="3.4" y="6.6" width="7" height="5.6" fill="none" stroke="#fff" stroke-width="1.2"/><path d="M3.4 3.8 H19 M13 7.2 H19 M13 9.6 H19 M13 12 H19" stroke="#fff" stroke-width="1.2"/></svg>
<svg class="a" style="left:1152px;top:744px;" width="14" height="8" viewBox="0 0 14 8"><path d="M1 7.2 L7 1.2 L13 7.2" fill="none" stroke="#fff" stroke-width="1.4"/></svg>
<svg class="a" style="left:1176px;top:743px;" width="16" height="10" viewBox="0 0 16 10"><rect x=".6" y=".6" width="13" height="8.8" fill="none" stroke="#fff" stroke-width="1.2"/><rect x="14" y="3" width="1.6" height="4" fill="#fff"/><rect x="2.2" y="2.2" width="6.6" height="5.6" fill="#fff"/></svg>
<svg class="a" style="left:1199px;top:741px;" width="17" height="15" viewBox="0 0 17 15"><rect x="2.6" y="1.6" width="13.6" height="8.6" fill="none" stroke="#fff" stroke-width="1.2"/><path d="M9.4 10.2 V13.6 M5.6 13.8 H13.2" stroke="#fff" stroke-width="1.2"/><rect x=".6" y=".6" width="4.4" height="3.6" fill="#1c2d42" stroke="#fff" stroke-width="1"/><path d="M2.8 4.2 V6.6" stroke="#fff" stroke-width="1"/></svg>
<svg class="a" style="left:1223px;top:742px;" width="16" height="13" viewBox="0 0 16 13"><path d="M.6 4.4 H3.4 L7 1 V12 L3.4 8.6 H.6 Z" fill="none" stroke="#fff" stroke-width="1.1" stroke-linejoin="round"/><path d="M9.8 4 L14.6 9 M14.6 4 L9.8 9" stroke="#fff" stroke-width="1.2"/></svg>
<span class="t" style="left:1264.7px;top:733.00px;font-size:12px;line-height:12px;color:#fff;letter-spacing:-0.546px;-webkit-text-stroke:.1px #fff;">10:27</span>
<span class="t" style="left:1249px;top:751.00px;font-size:12px;line-height:12px;color:#fff;letter-spacing:-0.339px;-webkit-text-stroke:.1px #fff;">09-07-2025</span>
<svg class="a" style="left:1325px;top:739px;" width="18" height="16" viewBox="0 0 18 16"><path d="M.6 .6 H16.4 V11.4 H6.6 L3.4 14.6 V11.4 H.6 Z" fill="#fff"/><path d="M3.4 3.6 H13.6 M3.4 6 H13.6 M3.4 8.4 H10" stroke="#1b2d40" stroke-width="1"/></svg>
<svg class="a" style="left:1331px;top:747px;" width="18" height="18" viewBox="0 0 18 18"><circle cx="9" cy="9" r="8" fill="#2b2f36" stroke="#6f757d" stroke-width="1"/></svg>
<span class="t" style="left:1336.6px;top:750.00px;font-size:12px;line-height:12px;color:#fff;font-weight:bold;">2</span>
<div class="a" style="left:1361.5px;top:728px;width:1px;height:40px;background:#6a7682;"></div>
<div class="a" style="left:7px;top:0px;width:668.6px;height:472px;background:#333;box-shadow:0 2px 18px 0 rgba(0,0,0,.36);"></div>
<div class="a" style="left:8px;top:1px;width:667px;height:30px;background:#000;"></div>
<div class="a" style="left:8px;top:31px;width:667px;height:42px;background:#191919;"></div>
<div class="a" style="left:8px;top:73px;width:667px;height:30px;background:#202020;"></div>
<div class="a" style="left:8px;top:103px;width:667px;height:293px;background:#202020;border-top:1px solid #181818;"></div>
<div class="a" style="left:8px;top:104px;width:157px;height:292px;background:#191919;"></div>
<div class="a" style="left:164px;top:104px;width:1.4px;height:292px;background:#151515;"></div>
<div class="a" style="left:165.6px;top:104px;width:1.2px;height:292px;background:#2b2b2b;"></div>
<div class="a" style="left:8px;top:396px;width:667px;height:75.4px;background:#383838;"></div>
<svg class="a" style="left:16px;top:7px;" width="16" height="16" viewBox="0 0 16 16"><circle cx="8" cy="8" r="7.8" fill="#fff"/><path d="M4.54 10.00 L1.07 4.00 A8 8 0 0 1 14.93 4.00 L8.00 4.00 A4.0 4.0 0 0 0 4.54 10.00 Z" fill="#ea4335"/><path d="M8.00 4.00 L14.93 4.00 A8 8 0 0 1 8.00 16.00 L11.46 10.00 A4.0 4.0 0 0 0 8.00 4.00 Z" fill="#fbbc04"/><path d="M11.46 10.00 L8.00 16.00 A8 8 0 0 1 1.07 4.00 L4.54 10.00 A4.0 4.0 0 0 0 11.46 10.00 Z" fill="#34a853"/><circle cx="8" cy="8" r="4.00" fill="#fff"/><circle cx="8" cy="8" r="3.12" fill="#4285f4"/></svg>
<span class="t" style="left:37px;top:10.00px;font-size:12px;line-height:12px;color:#fff;letter-spacing:-0.340px;">Open</span>
<svg class="a" style="left:654px;top:10px;" width="11" height="11" viewBox="0 0 11 11"><path d="M.5 .5 L10.5 10.5 M10.5 .5 L.5 10.5" stroke="#fff" stroke-width="1.2" fill="none"/></svg>
<svg class="a" style="left:20px;top:44px;" width="14" height="14" viewBox="0 0 14 14"><path d="M13 7 H2.4 M7.2 1.4 L1.6 7 L7.2 12.6" stroke="#fff" stroke-width="2" fill="none"/></svg>
<svg class="a" style="left:50px;top:44px;" width="14" height="14" viewBox="0 0 14 14"><path d="M1 7 H11.6 M6.8 1.4 L12.4 7 L6.8 12.6" stroke="#6e6e6e" stroke-width="2" fill="none"/></svg>
<svg class="a" style="left:76.4px;top:47.4px;" width="8" height="6" viewBox="0 0 8 6"><path d="M.8 1 L4 4.2 L7.2 1" stroke="#fff" stroke-width="1.8" fill="none"/></svg>
<svg class="a" style="left:94px;top:45px;" width="14" height="14" viewBox="0 0 14 14"><path d="M7 13.4 V2.6 M1.4 7.8 L7 2.2 L12.6 7.8" stroke="#fff" stroke-width="2" fill="none"/></svg>
<div class="a" style="left:114px;top:36px;width:335px;height:30px;border:1px solid #535353;"></div>
<svg class="a" style="left:119px;top:42px;" width="14" height="17" viewBox="0 0 14 17"><path d="M0 0 H11 Q13 0 13 2 V16 H0 Z" fill="#ffe082"/><path d="M9.5 10 H13 V16 H9.5 Z" fill="#f5cd5a"/></svg>
<span class="t" style="left:138px;top:44.00px;font-size:12px;line-height:12px;color:#9a9a9a;letter-spacing:1.312px;">«</span>
<span class="t" style="left:154px;top:45.00px;font-size:12px;line-height:12px;color:#fff;letter-spacing:-0.170px;">Pictures</span>
<svg class="a" style="left:205px;top:47px;" width="6" height="9" viewBox="0 0 6 9"><path d="M1 1 L4.5 4.5 L1 8" stroke="#8a8a8a" stroke-width="1.3" fill="none"/></svg>
<span class="t" style="left:218px;top:45.00px;font-size:12px;line-height:12px;color:#fff;letter-spacing:-0.266px;">Saved Pictures</span>
<svg class="a" style="left:395px;top:48.6px;" width="10" height="7" viewBox="0 0 10 7"><path d="M1 1 L5 5 L9 1" stroke="#a8a8a8" stroke-width="1.9" fill="none"/></svg>
<div class="a" style="left:415px;top:37px;width:1px;height:28px;background:#212121;"></div>
<svg class="a" style="left:426px;top:44px;" width="14" height="15" viewBox="0 0 14 15"><path d="M7.75 4.37 A4.3 4.3 0 1 1 3.48 6.13" stroke="#9c9c9c" stroke-width="1.8" fill="none"/><path d="M3 2.6 H7.9 V6.4" stroke="#9c9c9c" stroke-width="1.6" fill="none"/></svg>
<div class="a" style="left:461px;top:36px;width:202px;height:30px;border:1px solid #535353;"></div>
<svg class="a" style="left:475px;top:44px;" width="14" height="14" viewBox="0 0 14 14"><circle cx="8.4" cy="5.4" r="4.1" stroke="#9c9c9c" stroke-width="1.2" fill="none"/><path d="M5.4 8.4 L1 12.8" stroke="#9c9c9c" stroke-width="1.3"/></svg>
<span class="t" style="left:502px;top:45.00px;font-size:12px;line-height:12px;color:#9b9b9b;letter-spacing:-0.384px;">Search Saved Pictures</span>
<span class="t" style="left:26px;top:82.00px;font-size:12px;line-height:12px;color:#fff;letter-spacing:-0.213px;">Organise</span>
<svg class="a" style="left:78px;top:86px;" width="9" height="5" viewBox="0 0 9 5"><path d="M0 0 H9 L4.5 4.6 Z" fill="#bdbdbd"/></svg>
<span class="t" style="left:117px;top:82.00px;font-size:12px;line-height:12px;color:#fff;letter-spacing:0.064px;">New folder</span>
<svg class="a" style="left:554px;top:82px;" width="14" height="12" viewBox="0 0 14 12"><rect x=".5" y=".5" width="13" height="11" fill="#f2f2f2" stroke="#cfd6dd"/><rect x="1.5" y="2" width="11" height="7.5" fill="#4a90d0"/><path d="M1.5 7 Q5 4 8 6.5 T12.5 6 V9.5 H1.5 Z" fill="#3f7f4f"/><path d="M1.5 2 H12.5 V4 H1.5 Z" fill="#9fd0f5"/></svg>
<svg class="a" style="left:578px;top:86px;" width="9" height="5" viewBox="0 0 9 5"><path d="M0 0 H9 L4.5 4.6 Z" fill="#d0d0d0"/></svg>
<svg class="a" style="left:608px;top:82px;" width="16" height="12" viewBox="0 0 16 12"><rect width="16" height="12" fill="#fafafa"/><rect x="0" y="0" width="16" height="1.6" fill="#9aa0a6"/><rect x="10" y="1.6" width="5.4" height="9.6" fill="#4a9be8"/><rect x="4.2" y="1.6" width="1" height="9.6" fill="#3a3a3a"/><rect x="9" y="1.6" width="1" height="9.6" fill="#3a3a3a"/><rect x="0" y="1.6" width=".8" height="10.4" fill="#9aa0a6"/><rect x="15.2" y="1.6" width=".8" height="10.4" fill="#9aa0a6"/><rect x="0" y="11.2" width="16" height=".8" fill="#9aa0a6"/></svg>
<svg class="a" style="left:644px;top:80px;" width="16" height="16" viewBox="0 0 16 16"><circle cx="8" cy="8" r="7.7" fill="#0b62c4"/></svg>
<span class="t" style="left:648.3px;top:82.00px;font-size:12px;line-height:12px;color:#fff;font-weight:bold;">?</span>
<span class="t" style="left:345px;top:121.00px;font-size:12px;line-height:12px;color:#fff;letter-spacing:-0.027px;">No items match your search.</span>
<svg class="a" style="left:33px;top:124px;" width="16" height="15" viewBox="0 0 16 15"><path d="M9 0.8 L10.9 5.6 L15.8 5.9 L12 9.1 L13.3 14 L9 11.2 L4.9 14 L6.2 9.1 L2.6 6.1 L7.2 5.6 Z" fill="#2ea3f2"/><path d="M0.5 6.2 L5 5.2 M0 9.5 L4.6 8 M1.6 12.6 L5 10.6" stroke="#2ea3f2" stroke-width="1.1"/></svg>
<span class="t" style="left:53px;top:126.00px;font-size:12px;line-height:12px;color:#fff;letter-spacing:-0.280px;">Quick access</span>
<svg class="a" style="left:40px;top:149px;" width="16" height="13" viewBox="0 0 16 13"><rect x="0" y="0" width="16" height="12.4" rx=".8" fill="#1e9bf5"/><path d="M0 9 L9 0 H16 V2 L5 12.4 H0 Z" fill="#36aaf9" opacity=".55"/><rect x="1.2" y="10" width="12" height="1" fill="#e8f4ff"/><rect x="14" y="10" width="1" height="1" fill="#e8f4ff"/></svg>
<span class="t" style="left:61px;top:150.00px;font-size:12px;line-height:12px;color:#fff;letter-spacing:-0.219px;">Desktop</span>
<svg class="a" style="left:150px;top:150px;" width="12" height="12" viewBox="-0.5 -0.5 12 12"><g transform="translate(-0.6 0.4) rotate(45 5.5 5.5) scale(1.04)"><path d="M3.1 -0.4 H7.9 V0.9 L7.1 1.5 V4.6 L8.8 6.4 V7.4 H2.2 V6.4 L3.9 4.6 V1.5 L3.1 0.9 Z" fill="#8f8f8f"/><path d="M5.5 7.4 V12.2" stroke="#8f8f8f" stroke-width="1.1"/></g></svg>
<svg class="a" style="left:40px;top:171px;" width="16" height="17" viewBox="0 0 16 17"><path d="M5 0 H11 V8 H16 L8 16.5 L0 8 H5 Z" fill="#3b95ea"/></svg>
<span class="t" style="left:61px;top:174.00px;font-size:12px;line-height:12px;color:#fff;letter-spacing:-0.042px;">Downloads</span>
<svg class="a" style="left:150px;top:174px;" width="12" height="12" viewBox="-0.5 -0.5 12 12"><g transform="translate(-0.6 0.4) rotate(45 5.5 5.5) scale(1.04)"><path d="M3.1 -0.4 H7.9 V0.9 L7.1 1.5 V4.6 L8.8 6.4 V7.4 H2.2 V6.4 L3.9 4.6 V1.5 L3.1 0.9 Z" fill="#8f8f8f"/><path d="M5.5 7.4 V12.2" stroke="#8f8f8f" stroke-width="1.1"/></g></svg>
<svg class="a" style="left:42px;top:196px;" width="13" height="17" viewBox="0 0 13 17"><path d="M.5 .5 H8.6 L11.5 3.4 V15.5 H.5 Z" fill="#fafafa" stroke="#9a9a9a"/><path d="M8.6 .5 V3.4 H11.5" fill="#dcdcdc" stroke="#9a9a9a" stroke-width=".7"/><path d="M5.6 5.2 H9.6 M2.4 7.4 H9.6 M2.4 9.6 H9.6 M6 11.8 H9.6 M2.4 13.6 H9.6" stroke="#4b96dc" stroke-width=".9"/><rect x="2.4" y="10.9" width="2.8" height="1.9" fill="#6a8f6a"/><path d="M2.6 5.8 L3.9 2.6 L5.2 5.8 M3.1 4.7 H4.7" stroke="#2f7fd6" stroke-width=".9" fill="none"/></svg>
<span class="t" style="left:61px;top:198.00px;font-size:12px;line-height:12px;color:#fff;letter-spacing:0.033px;">Documents</span>
<svg class="a" style="left:150px;top:198px;" width="12" height="12" viewBox="-0.5 -0.5 12 12"><g transform="translate(-0.6 0.4) rotate(45 5.5 5.5) scale(1.04)"><path d="M3.1 -0.4 H7.9 V0.9 L7.1 1.5 V4.6 L8.8 6.4 V7.4 H2.2 V6.4 L3.9 4.6 V1.5 L3.1 0.9 Z" fill="#8f8f8f"/><path d="M5.5 7.4 V12.2" stroke="#8f8f8f" stroke-width="1.1"/></g></svg>
<svg class="a" style="left:40px;top:222px;" width="17" height="13" viewBox="0 0 17 13"><rect x=".5" y=".5" width="15.4" height="11.4" fill="#f6f6f6" stroke="#bdbdbd"/><rect x="2" y="2" width="12.4" height="8.4" fill="#c9e6f6"/><path d="M2 7 Q5 3.4 8.4 5.8 T14.4 5 V10.4 H2 Z" fill="#4d8f86"/><path d="M2 8.6 Q7 7.2 14.4 8.4 V10.4 H2 Z" fill="#2b5f80"/></svg>
<span class="t" style="left:61px;top:222.00px;font-size:12px;line-height:12px;color:#fff;letter-spacing:-0.170px;">Pictures</span>
<svg class="a" style="left:150px;top:222px;" width="12" height="12" viewBox="-0.5 -0.5 12 12"><g transform="translate(-0.6 0.4) rotate(45 5.5 5.5) scale(1.04)"><path d="M3.1 -0.4 H7.9 V0.9 L7.1 1.5 V4.6 L8.8 6.4 V7.4 H2.2 V6.4 L3.9 4.6 V1.5 L3.1 0.9 Z" fill="#8f8f8f"/><path d="M5.5 7.4 V12.2" stroke="#8f8f8f" stroke-width="1.1"/></g></svg>
<svg class="a" style="left:42px;top:243px;" width="11" height="17" viewBox="0 0 11 17"><path d="M4.6 0 C5.6 3 10.4 4 10 8.6 C9.8 10 9.2 10.8 8.6 11.2 C9.2 8 7.4 6.2 5.8 5.6 V13.2 A2.9 2.9 0 1 1 4.6 10.9 Z" fill="#2d9cf0"/></svg>
<span class="t" style="left:61px;top:246.00px;font-size:12px;line-height:12px;color:#fff;letter-spacing:0.131px;">Music</span>
<svg class="a" style="left:41px;top:269px;" width="14" height="15" viewBox="0 0 14 15"><rect x=".4" y=".4" width="13.2" height="14.2" fill="#2b2b2b" stroke="#5a5a5a" stroke-width=".8"/><rect x="1.2" y="1.4" width="1.2" height="1.2" fill="#cfcfcf"/><rect x="11.6" y="1.4" width="1.2" height="1.2" fill="#cfcfcf"/><rect x="1.2" y="3.8" width="1.2" height="1.2" fill="#cfcfcf"/><rect x="11.6" y="3.8" width="1.2" height="1.2" fill="#cfcfcf"/><rect x="1.2" y="6.199999999999999" width="1.2" height="1.2" fill="#cfcfcf"/><rect x="11.6" y="6.199999999999999" width="1.2" height="1.2" fill="#cfcfcf"/><rect x="1.2" y="8.6" width="1.2" height="1.2" fill="#cfcfcf"/><rect x="11.6" y="8.6" width="1.2" height="1.2" fill="#cfcfcf"/><rect x="1.2" y="11.0" width="1.2" height="1.2" fill="#cfcfcf"/><rect x="11.6" y="11.0" width="1.2" height="1.2" fill="#cfcfcf"/><rect x="1.2" y="13.4" width="1.2" height="1.2" fill="#cfcfcf"/><rect x="11.6" y="13.4" width="1.2" height="1.2" fill="#cfcfcf"/><rect x="3.2" y="1.2" width="7.6" height="5.8" fill="#3f86d6"/><rect x="3.2" y="8" width="7.6" height="5.8" fill="#3f86d6"/><path d="M3.2 5 L5.4 3 L7 4.6 L9 2.6 L10.8 4.6 V7 H3.2 Z" fill="#d8b23a"/><path d="M3.2 11.8 L5.4 9.8 L7 11.4 L9 9.4 L10.8 11.4 V13.8 H3.2 Z" fill="#d8b23a"/><rect x="4" y="1.8" width="2" height="1.6" fill="#e04a3a"/><rect x="7.6" y="8.6" width="2" height="1.6" fill="#e04a3a"/><rect x="6.4" y="2" width="1.6" height="1.4" fill="#8ad05a"/></svg>
<span class="t" style="left:61px;top:270.00px;font-size:12px;line-height:12px;color:#fff;letter-spacing:-0.247px;">Videos</span>
<svg class="a" style="left:32px;top:301px;" width="17" height="11" viewBox="0 0 17 11"><path d="M4 10.6 A3.6 3.6 0 0 1 3.6 3.6 A5 5 0 0 1 12.6 3 A4 4 0 0 1 13.4 10.6 Z" fill="#1b8fe6"/><path d="M3.6 3.6 A5 5 0 0 1 12.6 3 L7 7 Z" fill="#0f6dc4"/><path d="M2 9 L7.4 5.6 L15.6 8.8 A4 4 0 0 1 13.4 10.6 H4 A3.6 3.6 0 0 1 2 9 Z" fill="#36a8f5"/></svg>
<span class="t" style="left:53px;top:302.00px;font-size:12px;line-height:12px;color:#fff;letter-spacing:-0.211px;">OneDrive</span>
<div class="a" style="left:9px;top:329px;width:154px;height:22px;background:#333333;"></div>
<svg class="a" style="left:32px;top:332px;" width="17" height="15" viewBox="0 0 17 15"><rect x="1" y="0" width="15" height="10" fill="#39a7f2"/><path d="M1 7 L9 0 H16 V3 L8 10 H1 Z" fill="#58bbfa" opacity=".6"/><rect x="7" y="10" width="3" height="2" fill="#d8d8d8"/><rect x="3" y="12" width="11" height="1.2" fill="#e8e8e8"/><rect x="0" y="13.4" width="17" height="1.4" fill="#cfcfcf"/></svg>
<span class="t" style="left:53px;top:334.00px;font-size:12px;line-height:12px;color:#fff;letter-spacing:-0.527px;">This PC</span>
<svg class="a" style="left:32px;top:363px;" width="17" height="17" viewBox="0 0 17 17"><circle cx="11" cy="6" r="5.6" fill="#3d93d8"/><path d="M7.5 3.4 Q9 .8 11.6 .6 Q12.6 3 10.6 4.6 Q9 6 7.5 3.4 Z M12 7 Q14.6 6 16 7.8 Q15.4 10.6 13 11.2 Q11.6 9 12 7 Z" fill="#8ed0a6"/><rect x="0" y="6.6" width="10" height="7" fill="#dfeaf4"/><rect x="1" y="7.6" width="8" height="5" fill="#3aa4ef"/><rect x="4" y="13.6" width="2" height="1.6" fill="#cfcfcf"/><rect x="1.6" y="15.2" width="7" height="1.2" fill="#e0e0e0"/></svg>
<span class="t" style="left:53px;top:366.00px;font-size:12px;line-height:12px;color:#fff;letter-spacing:0.141px;">Network</span>
<span class="t" style="left:138px;top:411.00px;font-size:12px;line-height:12px;color:#fff;letter-spacing:-0.303px;">File name:</span>
<div class="a" style="left:197px;top:405px;width:261px;height:24px;background:#373737;border:1px solid #8c8c8c;"></div>
<svg class="a" style="left:443px;top:413.6px;" width="10" height="7" viewBox="0 0 10 7"><path d="M1 1 L5 5 L9 1" stroke="#c8c8c8" stroke-width="1.2" fill="none"/></svg>
<div class="a" style="left:470px;top:405px;width:188.2px;height:23.4px;background:#373737;border:1px solid #8c8c8c;"></div>
<span class="t" style="left:474px;top:411.00px;font-size:12px;line-height:12px;color:#fff;letter-spacing:-0.224px;">All Files</span>
<svg class="a" style="left:644px;top:413.4px;" width="10" height="7" viewBox="0 0 10 7"><path d="M1 1 L5 5 L9 1" stroke="#c8c8c8" stroke-width="1.2" fill="none"/></svg>
<div class="a" style="left:470px;top:434px;width:88px;height:26px;background:#333;border:2px solid #fff;"></div>
<span class="t" style="left:499px;top:441.00px;font-size:12px;line-height:12px;color:#fff;letter-spacing:-0.090px;">Open</span>
<div class="a" style="left:570px;top:434px;width:88px;height:26px;background:#333;border:1px solid #9b9b9b;box-shadow:inset 0 0 0 1px #d9d9d9;"></div>
<span class="t" style="left:596px;top:441.00px;font-size:12px;line-height:12px;color:#fff;letter-spacing:-0.560px;">Cancel</span>
<svg class="a" style="left:664px;top:462px;" width="8" height="8" viewBox="0 0 8 8"><rect x="6" y="0" width="2" height="2" fill="#c9c9c9"/><rect x="3" y="3" width="2" height="2" fill="#c9c9c9"/><rect x="6" y="3" width="2" height="2" fill="#c9c9c9"/><rect x="0" y="6" width="2" height="2" fill="#c9c9c9"/><rect x="3" y="6" width="2" height="2" fill="#c9c9c9"/><rect x="6" y="6" width="2" height="2" fill="#c9c9c9"/></svg>
</body>
</html>
